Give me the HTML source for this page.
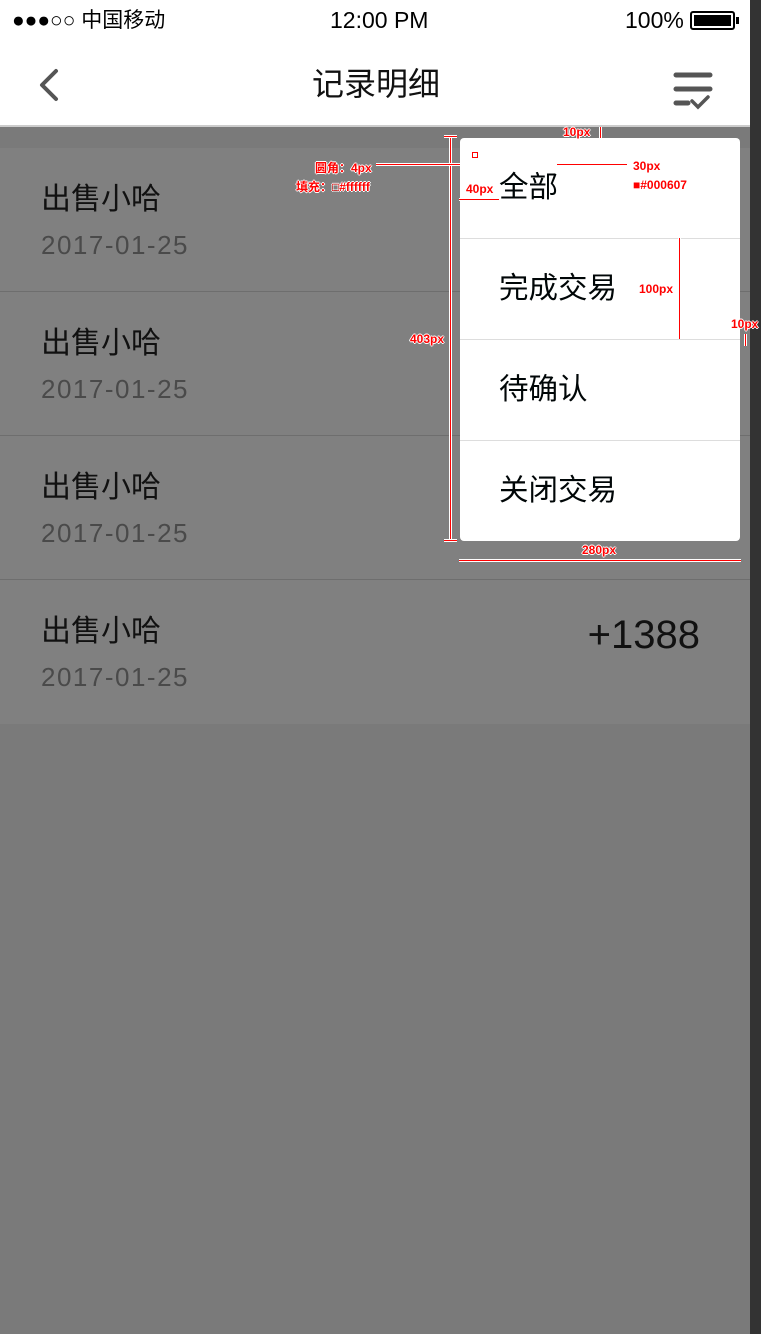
<!DOCTYPE html>
<html><head><meta charset="utf-8"><style>
*{margin:0;padding:0;box-sizing:border-box}
body{width:761px;height:1334px;position:relative;overflow:hidden;background:#7a7a7a;font-family:"Liberation Sans","Noto Sans CJK SC",sans-serif}
.a{position:absolute}
.row{position:absolute;left:0;width:750px;height:144px;background:#808080;border-bottom:1px solid #6e6e6e}
.t{position:absolute;left:41px;top:32px;font-size:30px;color:#111;line-height:40px}
.d{position:absolute;left:41px;top:80px;font-size:26px;color:#4a4a4a;line-height:34px;letter-spacing:1.5px}
.it{position:absolute;left:0;width:280px;height:101px;border-bottom:1px solid #ddd;font-size:29.5px;color:#000607;padding-left:39px;line-height:100px}
.r{color:#f00;font-size:12px;position:absolute;font-weight:bold;text-shadow:1px 0 0 #fff,-1px 0 0 #fff,0 1px 0 #fff,0 -1px 0 #fff;font-family:"Liberation Sans","Noto Sans CJK SC",sans-serif}
.vl{position:absolute;width:1px;background:#f00;border-left:1px solid #fff;width:3px;border-right:1px solid #fff}
.hl{position:absolute;height:3px;background:#f00;border-top:1px solid #fff;border-bottom:1px solid #fff}
</style></head><body>
<div class="a" style="left:750px;top:0;width:11px;height:1334px;background:#333"></div>
<div class="a" style="left:0;top:0;width:750px;height:127px;background:#fff;border-bottom:2px solid #ccc"></div>
<div class="a" style="left:12px;top:6px;font-size:21px;color:#000;line-height:30px">●●●○○ 中国移动</div>
<div class="a" style="left:330px;top:5px;font-size:23px;color:#000;line-height:30px">12:00 PM</div>
<div class="a" style="left:625px;top:5px;font-size:23px;color:#000;line-height:30px">100%</div>
<div class="a" style="left:690px;top:11px;width:45px;height:19px;border:2px solid #000;border-radius:3px;padding:2px"><div style="width:100%;height:100%;background:#000"></div></div>
<div class="a" style="left:736px;top:17px;width:3px;height:7px;background:#000"></div>
<svg class="a" style="left:36px;top:68px" width="24" height="34"><path d="M20 3 L6 17 L20 31" fill="none" stroke="#555" stroke-width="4" stroke-linecap="round" stroke-linejoin="round"/></svg>
<div class="a" style="left:0;width:750px;top:62px;text-align:center;font-size:32px;color:#111;line-height:44px;padding-left:2px">记录明细</div>
<svg class="a" style="left:670px;top:70px" width="44" height="42"><g stroke="#555" stroke-width="5" stroke-linecap="round" fill="none"><path d="M6 5H40M6 19H40M6 33H18"/><path d="M22 31 L28 37 L38 27" stroke-width="3.5"/></g></svg>

<div class="row" style="top:148px"><div class="t">出售小哈</div><div class="d">2017-01-25</div></div>
<div class="row" style="top:292px"><div class="t">出售小哈</div><div class="d">2017-01-25</div></div>
<div class="row" style="top:436px"><div class="t">出售小哈</div><div class="d">2017-01-25</div></div>
<div class="row" style="top:580px;border-bottom:none"><div class="t">出售小哈</div><div class="d">2017-01-25</div><div class="a" style="right:50px;top:30px;font-size:40px;color:#111;line-height:50px">+1388</div></div>

<div class="a" style="left:460px;top:138px;width:280px;height:403px;background:#fff;border-radius:4px;overflow:hidden">
<div class="it" style="top:0">全部</div>
<div class="it" style="top:101px">完成交易</div>
<div class="it" style="top:202px">待确认</div>
<div class="it" style="top:303px;border-bottom:none">关闭交易</div>
</div>

<div class="r" style="left:563px;top:125px">10px</div>
<div class="vl" style="left:599px;top:127px;height:11px"></div>
<div class="vl" style="left:449px;top:137px;height:405px"></div>
<div class="hl" style="left:444px;top:135px;width:13px"></div>
<div class="hl" style="left:444px;top:539px;width:13px"></div>
<div class="r" style="left:410px;top:332px">403px</div>
<div class="r" style="left:315px;top:159px">圆角：4px</div>
<div class="hl" style="left:376px;top:163px;width:84px"></div>
<div class="a" style="left:472px;top:152px;width:6px;height:6px;border:1px solid #f00;background:#fff"></div>
<div class="r" style="left:296px;top:178px">填充：□#ffffff</div>
<div class="r" style="left:466px;top:182px">40px</div>
<div class="hl" style="left:459px;top:198px;width:40px"></div>
<div class="hl" style="left:557px;top:163px;width:70px"></div>
<div class="r" style="left:633px;top:159px">30px</div>
<div class="r" style="left:633px;top:178px">■#000607</div>
<div class="vl" style="left:678px;top:238px;height:101px"></div>
<div class="r" style="left:639px;top:282px">100px</div>
<div class="r" style="left:731px;top:317px">10px</div>
<div class="vl" style="left:744px;top:334px;height:12px"></div>
<div class="hl" style="left:459px;top:559px;width:282px"></div>
<div class="r" style="left:582px;top:543px">280px</div>
</body></html>
